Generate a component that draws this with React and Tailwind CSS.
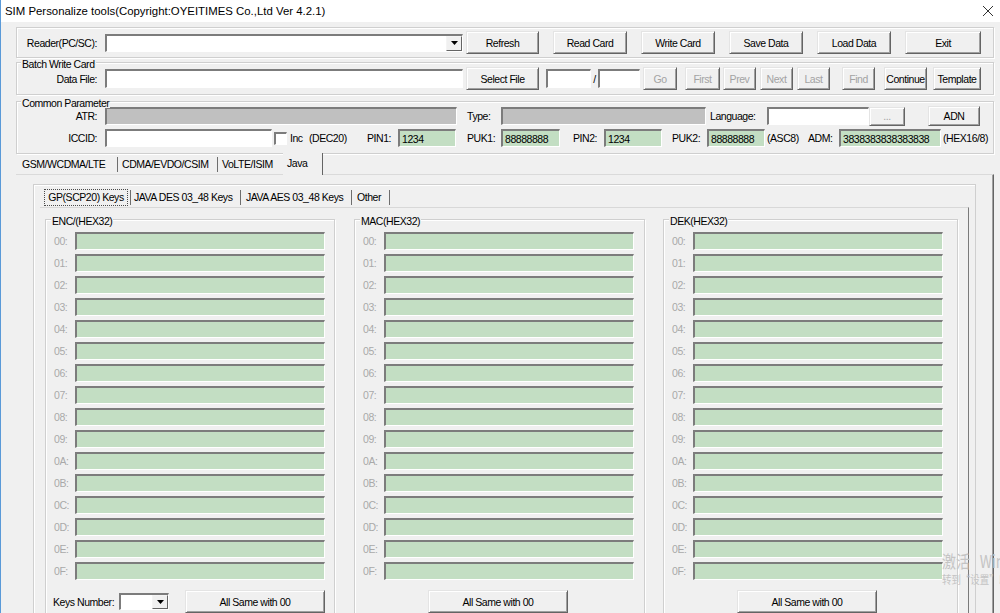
import React from "react";

const KEY_ROWS = ["00", "01", "02", "03", "04", "05", "06", "07", "08", "09", "0A", "0B", "0C", "0D", "0E", "0F"];

function Btn({ className = "", disabled = false, children }) {
  return (
    <div
      className={`flex shrink-0 items-center justify-center whitespace-nowrap border border-t-[#e4e4e4] border-l-[#e4e4e4] border-r-[#646464] border-b-[#646464] bg-[#f0f0f0] shadow-[inset_1px_1px_0_#ffffff,inset_-1px_-1px_0_#a0a0a0] ${
        disabled ? "text-[#a3a3a3]" : "text-black"
      } ${className}`}
    >
      {children}
    </div>
  );
}

// sunken edit box, windows classic style
function Box({ className = "", children }) {
  return (
    <div
      className={`flex shrink-0 items-center overflow-hidden whitespace-nowrap border-t-2 border-l-2 border-r border-b border-t-[#7c7c7c] border-l-[#7c7c7c] border-r-white border-b-white pl-[2px] ${className}`}
    >
      {children}
    </div>
  );
}

function Combo({ className = "" }) {
  return (
    <Box className={`justify-end bg-white pl-0 ${className}`}>
      <div className="flex h-full w-[16px] items-center justify-center border border-t-[#f4f4f4] border-l-[#f4f4f4] border-r-[#646464] border-b-[#646464] bg-[#f0f0f0]">
        <svg width="7" height="4" viewBox="0 0 7 4">
          <path d="M0 0h7L3.5 4z" fill="#000" />
        </svg>
      </div>
    </Box>
  );
}

function Group({ legend, legendLeft = "left-[4px]", className = "", children }) {
  return (
    <div className={`relative shrink-0 border border-[#cfcfcf] shadow-[inset_1px_1px_0_#ffffff,1px_1px_0_#ffffff] ${className}`}>
      {legend && (
        <span className={`absolute -top-[3px] ${legendLeft} whitespace-nowrap bg-[#f0f0f0] px-px leading-[9px]`}>{legend}</span>
      )}
      {children}
    </div>
  );
}

function Sep({ className = "" }) {
  return <div className={`h-[15px] w-px shrink-0 bg-[#6e6e6e] ${className}`} />;
}

function KeyGroup({ legend, className = "", footer }) {
  return (
    <Group legend={legend} legendLeft="left-[5px]" className={`flex flex-col pb-[8px] pt-[10px] ${className}`}>
      {KEY_ROWS.map((k) => (
        <div key={k} className="flex h-[22px] items-center">
          <span className="w-[29px] shrink-0 pl-[8px] text-[#a9a9a9]">{k}:</span>
          <Box className="h-[18px] w-[250px] bg-[#c3dec3]" />
        </div>
      ))}
      <div className="mt-[8px] flex h-[23px] items-center">{footer}</div>
    </Group>
  );
}

export default function App() {
  return (
    <div className="relative h-[613px] w-[1000px] overflow-hidden whitespace-nowrap border-l border-[#5a9ad8] bg-[#f0f0f0] font-['Liberation_Sans',Arial,sans-serif] text-[10.5px] leading-[14px] tracking-[-0.45px] text-black">
      {/* title bar */}
      <div className="flex h-[22px] items-center justify-between bg-white pl-[4px] pr-[6px] text-[11.4px] tracking-normal">
        <span>SIM Personalize tools(Copyright:OYEITIMES Co.,Ltd Ver 4.2.1)</span>
        <svg width="12" height="12" viewBox="0 0 12 12">
          <path d="M1 1l10 10M11 1L1 11" stroke="#333" strokeWidth="1" />
        </svg>
      </div>

      <div className="flex flex-col pl-[15px]">
        {/* reader row */}
        <Group className="mt-[5px] flex h-[31px] w-[978px] items-center">
          <span className="w-[80px] shrink-0 text-right">Reader(PC/SC):</span>
          <Combo className="ml-[8px] h-[18px] w-[358px]" />
          <Btn className="ml-[3px] h-[23px] w-[73px]">Refresh</Btn>
          <Btn className="ml-[14px] h-[23px] w-[74px]">Read Card</Btn>
          <Btn className="ml-[14px] h-[23px] w-[74px]">Write Card</Btn>
          <Btn className="ml-[14px] h-[23px] w-[74px]">Save Data</Btn>
          <Btn className="ml-[14px] h-[23px] w-[74px]">Load Data</Btn>
          <Btn className="ml-[14px] h-[23px] w-[76px]">Exit</Btn>
        </Group>

        {/* batch write card */}
        <Group legend="Batch Write Card" className="mt-[4px] flex h-[33px] w-[978px] items-center">
          <span className="w-[80px] shrink-0 text-right">Data File:</span>
          <Box className="ml-[8px] h-[19px] w-[358px] bg-white" />
          <Btn className="ml-[3px] h-[23px] w-[73px]">Select File</Btn>
          <Box className="ml-[7px] h-[19px] w-[45px] bg-white" />
          <span className="w-[7px] shrink-0 text-center">/</span>
          <Box className="h-[19px] w-[42px] bg-white" />
          <Btn disabled className="ml-[3px] h-[23px] w-[34px]">Go</Btn>
          <Btn disabled className="ml-[8px] h-[23px] w-[35px]">First</Btn>
          <Btn disabled className="ml-[3px] h-[23px] w-[33px]">Prev</Btn>
          <Btn disabled className="ml-[4px] h-[23px] w-[33px]">Next</Btn>
          <Btn disabled className="ml-[4px] h-[23px] w-[33px]">Last</Btn>
          <Btn disabled className="ml-[12px] h-[23px] w-[33px]">Find</Btn>
          <Btn className="ml-[9px] h-[23px] w-[43px]">Continue</Btn>
          <Btn className="ml-[6px] h-[23px] w-[48px]">Template</Btn>
        </Group>

        {/* common parameter */}
        <Group legend="Common Parameter" className="mt-[6px] flex h-[53px] w-[978px] flex-col pt-[3px]">
          <div className="flex h-[22px] items-center">
            <span className="w-[80px] shrink-0 text-right">ATR:</span>
            <Box className="ml-[8px] h-[18px] w-[352px] bg-[#c0c0c0]" />
            <span className="ml-[10px] w-[34px] shrink-0">Type:</span>
            <Box className="h-[18px] w-[205px] bg-[#c0c0c0]" />
            <span className="ml-[4px] w-[57px] shrink-0">Language:</span>
            <Box className="h-[18px] w-[102px] bg-white" />
            <Btn disabled className="h-[19px] w-[36px]">...</Btn>
            <Btn className="ml-[23px] h-[20px] w-[52px]">ADN</Btn>
          </div>
          <div className="flex h-[22px] items-center">
            <span className="w-[80px] shrink-0 text-right">ICCID:</span>
            <Box className="ml-[8px] h-[18px] w-[167px] bg-white" />
            <Box className="ml-[2px] h-[13px] w-[13px] bg-white pl-0" />
            <span className="ml-[3px] w-[19px] shrink-0">Inc</span>
            <span className="w-[58px] shrink-0">(DEC20)</span>
            <span className="w-[31px] shrink-0">PIN1:</span>
            <Box className="h-[18px] w-[58px] bg-[#c3dec3]">1234</Box>
            <span className="ml-[11px] w-[34px] shrink-0">PUK1:</span>
            <Box className="h-[18px] w-[59px] bg-[#c3dec3]">88888888</Box>
            <span className="ml-[13px] w-[31px] shrink-0">PIN2:</span>
            <Box className="h-[18px] w-[58px] bg-[#c3dec3]">1234</Box>
            <span className="ml-[10px] w-[35px] shrink-0">PUK2:</span>
            <Box className="h-[18px] w-[58px] bg-[#c3dec3]">88888888</Box>
            <span className="ml-[2px] w-[41px] shrink-0">(ASC8)</span>
            <span className="w-[31px] shrink-0">ADM:</span>
            <Box className="h-[18px] w-[102px] bg-[#c3dec3]">3838383838383838</Box>
            <span className="ml-[2px]">(HEX16/8)</span>
          </div>
        </Group>

        {/* outer tabs */}
        <div className="flex h-[20px] w-[978px] items-stretch">
          <div className="flex w-[101px] items-center pl-[6px]">GSM/WCDMA/LTE</div>
          <Sep className="my-auto" />
          <div className="flex w-[99px] items-center pl-[4px]">CDMA/EVDO/CSIM</div>
          <Sep className="my-auto" />
          <div className="flex w-[65px] items-center pl-[4px]">VoLTE/ISIM</div>
          <div className="relative z-10 -mb-px -mt-px flex w-[40px] items-center border-r border-r-[#646464] bg-[#f0f0f0] pb-[2px] pl-[4px]">
            Java
          </div>
        </div>

        <div className="flex h-[460px] w-[978px] flex-col border-r border-t border-r-[#646464] border-t-[#dadada] shadow-[inset_-1px_0_0_#a0a0a0]">
          <div className="ml-[17px] mt-[9px] flex w-[943px] flex-col border border-[#cfcfcf] px-[6px] pt-[2px] shadow-[inset_1px_1px_0_#ffffff]">
            {/* inner tabs */}
            <div className="flex h-[20px] items-center pl-[4px]">
              <div className="flex h-[17px] w-[84px] shrink-0 items-center justify-center border border-dotted border-[#4a4a4a]">
                GP(SCP20) Keys
              </div>
              <Sep className="ml-[2px]" />
              <div className="w-[109px] shrink-0 pl-[3px]">JAVA DES 03_48 Keys</div>
              <Sep />
              <div className="w-[110px] shrink-0 pl-[5px]">JAVA AES 03_48 Keys</div>
              <Sep />
              <div className="w-[37px] shrink-0 pl-[5px]">Other</div>
              <Sep />
            </div>

            <div className="flex w-[929px] border-r border-t border-r-[#7a7a7a] border-t-[#d8d8d8] pl-[5px] pt-[11px]">
              <KeyGroup
                legend="ENC/(HEX32)"
                className="w-[290px]"
                footer={
                  <>
                    <span className="ml-[7px] w-[66px] shrink-0">Keys Number:</span>
                    <Combo className="h-[17px] w-[50px]" />
                    <Btn className="ml-[16px] h-[23px] w-[140px]">All Same with 00</Btn>
                  </>
                }
              />
              <KeyGroup
                legend="MAC(HEX32)"
                className="ml-[19px] w-[291px]"
                footer={<Btn className="ml-[73px] h-[23px] w-[140px]">All Same with 00</Btn>}
              />
              <KeyGroup
                legend="DEK(HEX32)"
                className="ml-[18px] w-[295px]"
                footer={<Btn className="ml-[73px] h-[23px] w-[140px]">All Same with 00</Btn>}
              />
            </div>
          </div>
        </div>
      </div>

      {/* windows activation watermark */}
      <div className="pointer-events-none absolute left-[941px] top-[550px] origin-left scale-x-[0.82] font-['Noto_Sans_CJK_SC',sans-serif] tracking-normal text-[#c4c4c4]">
        <div className="text-[17px] leading-[22px]">
          激活<span className="pl-[12px]">Windows</span>
        </div>
        <div className="text-[11.5px] leading-[15px]">转到“设置”以激活 Windows。</div>
      </div>
    </div>
  );
}
